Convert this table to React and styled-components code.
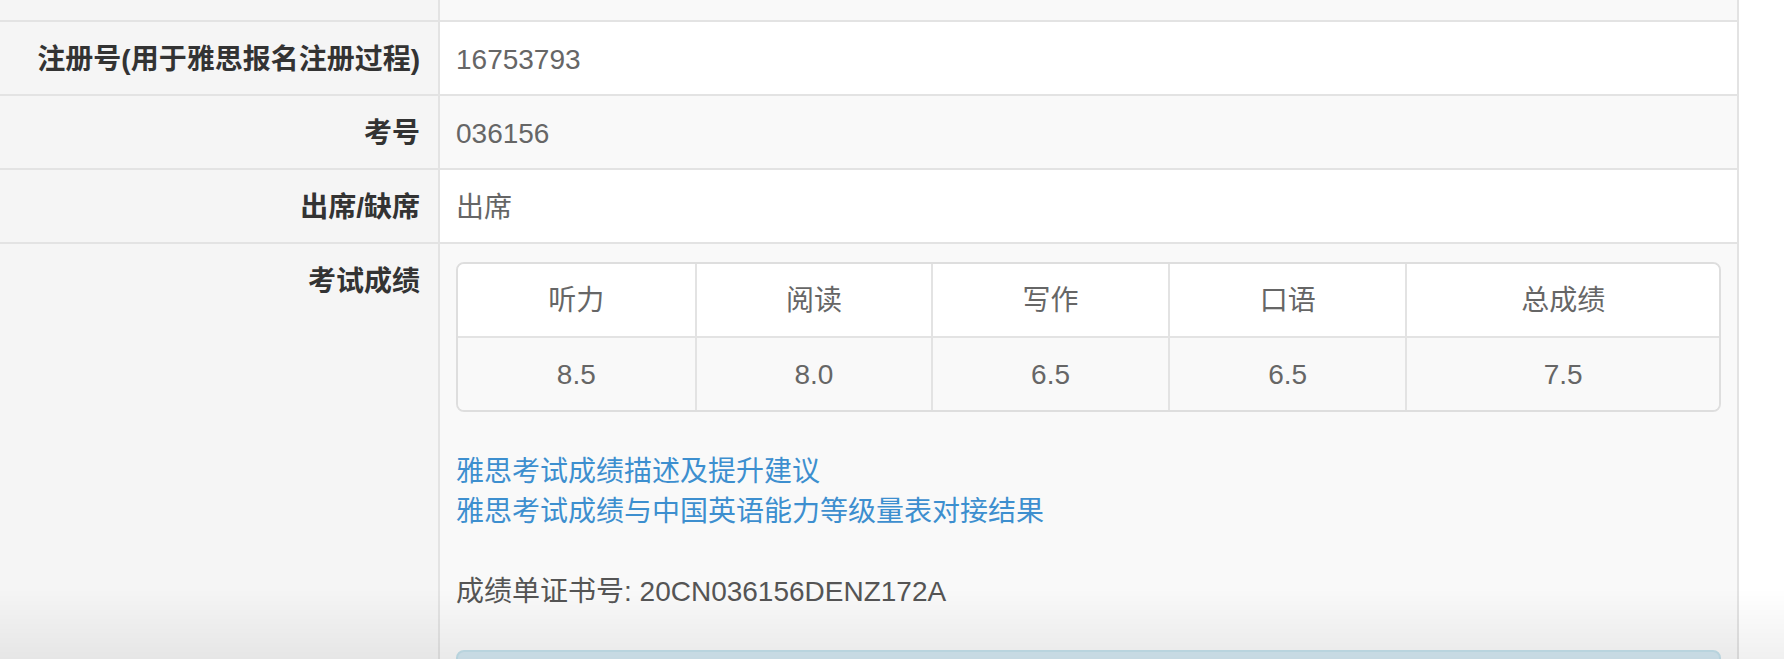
import React from "react";
import styled, { createGlobalStyle, css } from "styled-components";

const GlobalStyle = createGlobalStyle`
  html, body {
    margin: 0;
    padding: 0;
    background: #ffffff;
  }
  body {
    font-family: "Liberation Sans", "Noto Sans CJK SC", sans-serif;
    font-size: 28px;
    line-height: 40px;
    color: #333;
    overflow: hidden;
  }
  body::after {
    content: "";
    position: fixed;
    left: 0;
    right: 0;
    bottom: 0;
    height: 70px;
    pointer-events: none;
    background: linear-gradient(to bottom, rgba(0,0,0,0), rgba(0,0,0,0.06));
  }
`;

const Page = styled.div`
  display: flex;
  padding-right: 45px;
  min-height: 659px;
`;

const InfoTable = styled.div`
  flex: 1;
  display: flex;
  flex-direction: column;
  border-right: 2px solid #e3e3e3;
`;

const Row = styled.div`
  display: grid;
  grid-template-columns: 440px 1fr;
  border-top: ${(p) => (p.$first ? "none" : "2px solid #e3e3e3")};
  background: ${(p) => (p.$striped ? "#f9f9f9" : "#ffffff")};
  ${(p) =>
    p.$stub &&
    css`
      height: 20px;
    `}
`;

const Label = styled.div`
  background: #f5f5f5;
  border-right: 2px solid #e3e3e3;
  padding: 18px 18px 14px 16px;
  text-align: right;
  font-weight: 700;
  color: #333;
`;

const Value = styled.div`
  padding: 18px 16px 14px;
  color: #666;
  min-width: 0;
`;

const ScoreTable = styled.div`
  display: grid;
  grid-template-columns: 237fr 237fr 237fr 238fr 314fr;
  border: 2px solid #dedede;
  border-radius: 8px;
  overflow: hidden;
  margin-bottom: 40px;
`;

const ScoreCell = styled.div`
  padding: 17px 16px 15px;
  text-align: center;
  color: #666;
  background: ${(p) => (p.$head ? "#ffffff" : "#f9f9f9")};
  border-left: ${(p) => (p.$firstCol ? "none" : "2px solid #e3e3e3")};
  border-top: ${(p) => (p.$head ? "none" : "2px solid #e3e3e3")};
`;

const LinkList = styled.div`
  display: flex;
  flex-direction: column;
`;

const Link = styled.a`
  color: #3d8fcf;
  text-decoration: none;
  align-self: flex-start;
`;

const CertLine = styled.div`
  margin-top: 40px;
  color: #555;
`;

const InfoAlert = styled.div`
  margin-top: 38px;
  height: 60px;
  background: #d3e7f1;
  border: 2px solid #c3e0ea;
  border-radius: 8px;
`;

const heads = ["听力", "阅读", "写作", "口语", "总成绩"];
const scores = ["8.5", "8.0", "6.5", "6.5", "7.5"];

export default function App() {
  return (
    <>
      <GlobalStyle />
      <Page>
        <InfoTable>
          <Row $first $stub $striped>
            <Label />
            <Value />
          </Row>
          <Row>
            <Label>注册号(用于雅思报名注册过程)</Label>
            <Value>16753793</Value>
          </Row>
          <Row $striped>
            <Label>考号</Label>
            <Value>036156</Value>
          </Row>
          <Row>
            <Label>出席/缺席</Label>
            <Value>出席</Value>
          </Row>
          <Row $striped>
            <Label>考试成绩</Label>
            <Value>
              <ScoreTable>
                {heads.map((h, i) => (
                  <ScoreCell key={h} $head $firstCol={i === 0}>
                    {h}
                  </ScoreCell>
                ))}
                {scores.map((s, i) => (
                  <ScoreCell key={i} $firstCol={i === 0}>
                    {s}
                  </ScoreCell>
                ))}
              </ScoreTable>
              <LinkList>
                <Link href="#">雅思考试成绩描述及提升建议</Link>
                <Link href="#">雅思考试成绩与中国英语能力等级量表对接结果</Link>
              </LinkList>
              <CertLine>成绩单证书号: 20CN036156DENZ172A</CertLine>
              <InfoAlert />
            </Value>
          </Row>
        </InfoTable>
      </Page>
    </>
  );
}
